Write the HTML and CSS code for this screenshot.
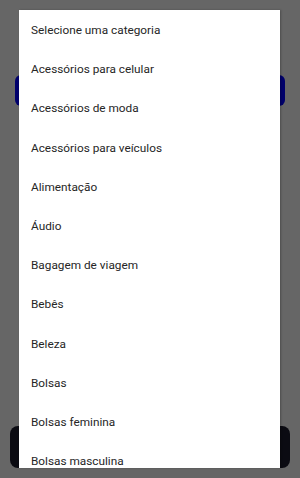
FILE: index.html
```html
<!DOCTYPE html>
<html lang="pt-BR">
  <head>
    <meta charset="UTF-8" />
    <meta name="viewport" content="width=device-width, initial-scale=1.0" />
    <title>Categoria</title>
    <link rel="stylesheet" href="styles.css">
  </head>
  <body>
    <div class="screen">
      <div class="btn-primary"></div>
      <div class="spacer"></div>
      <div class="btn-dark"></div>
    </div>
    <div class="dialog">
      <ul class="options">
        <li>Selecione uma categoria</li>
        <li>Acessórios para celular</li>
        <li>Acessórios de moda</li>
        <li>Acessórios para veículos</li>
        <li>Alimentação</li>
        <li>Áudio</li>
        <li>Bagagem de viagem</li>
        <li>Bebês</li>
        <li>Beleza</li>
        <li>Bolsas</li>
        <li>Bolsas feminina</li>
        <li>Bolsas masculina</li>
      </ul>
    </div>
  </body>
</html>
```

FILE: styles.css
```css
html, body {
  margin: 0;
  height: 100%;
}

body {
  font-family: Roboto, "Noto Sans", sans-serif;
  background-color: #666666;
  overflow: hidden;
}

.screen {
  display: flex;
  flex-direction: column;
  height: 100%;
  padding: 75px 10px 10px;
  box-sizing: border-box;
}

.btn-primary {
  height: 31px;
  margin: 0 5px;
  background-color: #00006b;
  border-radius: 6px;
}

.spacer {
  flex: 1;
}

.btn-dark {
  height: 42px;
  background-color: #0b0b12;
  border-radius: 8px;
}

.dialog {
  position: absolute;
  left: 19px;
  top: 10px;
  width: 261px;
  height: 458px;
  background-color: #fff;
  box-shadow: 1px 0 2px rgba(0, 0, 0, 0.25);
  overflow: hidden;
}

.options {
  list-style: none;
  margin: 0;
  padding: 1px 0 0;
}

.options li {
  height: 39.2px;
  line-height: 39.2px;
  padding-left: 12px;
  font-size: 11.8px;
  color: #262626;
  white-space: nowrap;
}
```
